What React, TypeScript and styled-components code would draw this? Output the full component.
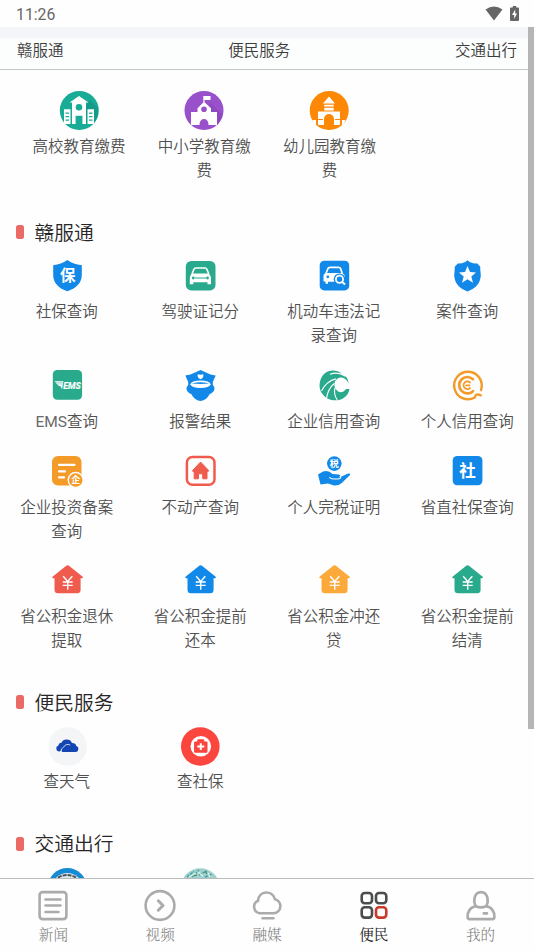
import React from "react";
import styled, { createGlobalStyle } from "styled-components";

const GlobalStyle = createGlobalStyle`
  * { box-sizing: border-box; }
  body { margin: 0; background: #fff; }
`;

const sans = `Roboto, "Noto Sans CJK SC", sans-serif`;
const sansBook = `"Noto Sans CJK SC DemiLight", "Noto Sans CJK SC", sans-serif`;

const Screen = styled.div`
  position: relative;
  display: flex;
  flex-direction: column;
  width: 534px;
  height: 950px;
  overflow: hidden;
  background: #fefefe;
  color: #555;
  font-family: ${sans};
`;

const StatusBar = styled.header`
  display: flex;
  align-items: center;
  justify-content: space-between;
  flex: none;
  height: 27px;
  padding: 1px 15px 0 16px;
  font-size: 15.8px;
  color: #666;
`;

const StatusIcons = styled.div`
  display: flex;
  align-items: center;
  gap: 7px;
  height: 100%;
  padding-bottom: 2px;
`;

const Band = styled.div`
  flex: none;
  height: 11px;
  background: #f4f5f9;
`;

const AnchorBar = styled.nav`
  display: flex;
  justify-content: space-between;
  flex: none;
  height: 32px;
  padding: 0 17px;
  border-bottom: 1px solid #c4c5c5;
  font-family: ${sansBook};
  font-size: 15.5px;
  line-height: 23px;
  font-weight: 350;
  color: #3c3c3c;
  background: #fcfefe;
`;

const Content = styled.main`
  flex: 1;
  min-height: 0;
  overflow: hidden;
  padding-top: 21.3px;
`;

const Grid = styled.div<{ $inset?: boolean }>`
  display: grid;
  grid-template-columns: repeat(4, ${(p) => (p.$inset ? "125.2px" : "133.5px")});
  padding-left: ${(p) => (p.$inset ? "16.5px" : "0")};
`;

const Service = styled.div`
  display: flex;
  flex-direction: column;
  align-items: center;
  padding-bottom: 18.1px;
`;

const Label = styled.div`
  width: 96px;
  margin-top: 4.9px;
  font-family: "Liberation Sans", ${sansBook};
  font-size: 15.5px;
  font-weight: 350;
  line-height: 23.6px;
  text-align: center;
  white-space: nowrap;
  color: #515151;
`;

const Latin = styled.span`
  font-family: Roboto, sans-serif;
  font-weight: 400;
  color: #6a6a6a;
`;

const SectionTitle = styled.h2`
  display: flex;
  align-items: center;
  gap: 11px;
  height: 56px;
  margin: 0;
  padding: 5.5px 0 0 16px;
  font-family: ${sansBook};
  font-size: 19.8px;
  font-weight: 350;
  color: #262626;
`;

const Marker = styled.span`
  width: 7.5px;
  height: 14px;
  margin-top: 2px;
  border-radius: 2.5px;
  background: #ec6a66;
`;

const Glyph = styled.svg`
  display: block;
  flex: none;
  width: 40px;
  height: 39px;
`;

const ScrollThumb = styled.div`
  position: absolute;
  top: 27px;
  right: 0;
  width: 6px;
  height: 702px;
  background: #b5b5b5;
`;

const TabBar = styled.footer`
  display: grid;
  grid-template-columns: repeat(5, 1fr);
  flex: none;
  height: 72px;
  border-top: 1px solid #bbb;
`;

const Tab = styled.div<{ $active?: boolean }>`
  display: flex;
  flex-direction: column;
  align-items: center;
  padding-top: 9px;
  color: ${(p) => (p.$active ? "#222" : "#808080")};
  font-family: "Noto Serif CJK SC", "Noto Serif SC", "Source Han Serif SC", "Noto Sans CJK SC", serif;
  font-size: 14.6px;
  font-weight: ${(p) => (p.$active ? 400 : 300)};
  line-height: 22px;
`;

const TabGlyph = styled.svg`
  display: block;
  width: 34px;
  height: 34px;
  margin-bottom: 1px;
  fill: none;
  stroke: #ababab;
  stroke-width: 2.6;
  stroke-linecap: round;
  stroke-linejoin: round;
`;

const GlyphText = styled.text`
  font-family: ${sans};
  font-weight: 700;
  text-anchor: middle;
`;

const Box = ({ children }: { children: React.ReactNode }) => <Glyph viewBox="0 0 40 39">{children}</Glyph>;

const blue = "#1289e8";
const green = "#2aaa8c";
const orange = "#f39a28";
const red = "#ef5c4e";

const University = () => (
  <Box>
    <circle cx="20.3" cy="19.5" r="19.5" fill="#18ab96" />
    <path d="M31 9 39 17V25L35 33H14Z" fill="#108e7b" opacity=".5" />
    <path d="M20 5 29.5 11.6H27V33H13V11.6H10.5Z" fill="#fff" />
    <path d="M5 18.3H11.5V33H5ZM28.5 18.3H35V33H28.5Z" fill="#fff" />
    <circle cx="20" cy="16.3" r="3.3" fill="#18ab96" />
    <path d="M16.6 24.8H23.4V33H16.6ZM6.5 21.5h3.5v1.2H6.5Zm0 3.5h3.5v1.2H6.5Zm0 3.5h3.5v1.2H6.5ZM30 21.5h3.5v1.2H30Zm0 3.5h3.5v1.2H30Zm0 3.5h3.5v1.2H30Z" fill="#18ab96" />
  </Box>
);

const School = () => (
  <Box>
    <circle cx="20" cy="19.5" r="19.5" fill="#9850cb" />
    <path d="M26 12 39 24 34 34H22Z" fill="#783ba9" opacity=".35" />
    <path d="M19.3 5H26.5V9H20.5V11.3L27 17.2V21H33V34H7V21H13.5V17.2L19.3 11.6Z" fill="#fff" />
    <circle cx="20" cy="18.3" r="2.8" fill="#9850cb" />
    <path d="M15.6 34V32.5a4.4 4.4 0 0 1 8.8 0V34Z" fill="#9850cb" />
  </Box>
);

const Kindergarten = () => (
  <Box>
    <circle cx="20.2" cy="19.5" r="19.5" fill="#fc8806" />
    <path d="M20 5.5 26 12.5H14ZM15.3 13.8H24.7V15.5H15.3ZM15.3 16.7H24.7V19.5H15.3Z" fill="#fff" />
    <path d="M9 20.5H31V34H25V28a5 5 0 0 0-10 0V34H9Z" fill="#fff" />
    <path d="M3.5 29H7V34H5ZM33 29H36.5L34 34H33Z" fill="#fff" />
    <path d="M8 28.5H14M26 28.5H32M8 28.5V34M32 28.5V34" stroke="#fc8806" strokeWidth="1" />
  </Box>
);

const Insurance = () => (
  <Box>
    <path d="M20.3 4C24.5 6.8 29 8.5 34.8 9.2V19C34.8 27 29 32.5 20.3 35.2C11.8 32.5 6.2 27 6.2 19V9.2C11.5 8.5 16.2 6.8 20.3 4Z" fill={blue} />
    <GlyphText x="20.7" y="25.3" fontSize="15.5" fill="#fff">保</GlyphText>
  </Box>
);

const Licence = () => (
  <Box>
    <rect x="5.8" y="4.9" width="29.7" height="29.5" rx="5.5" fill={green} />
    <path d="M12 18 14 13.1Q14.4 12 15.8 12H25Q26.4 12 26.8 13.1L28.8 18" fill="none" stroke="#fff" strokeWidth="1.6" />
    <path d="M12 17.5H28.5Q31 19 31 22V28.3H27.5V26.3H13.3V28.3H9.8V22Q9.8 19 12 17.5Z" fill="#fff" />
    <circle cx="13.3" cy="22" r="1.4" fill={green} />
    <circle cx="27.5" cy="22" r="1.4" fill={green} />
    <path d="M15 22H26" stroke={green} strokeWidth="1" />
  </Box>
);

const Violation = () => (
  <Box>
    <rect x="5.7" y="4.7" width="29.5" height="29.7" rx="4.5" fill={blue} />
    <path d="M12 17.5 14 12.4Q14.5 11.3 16 11.3H24.5Q26 11.3 26.5 12.4L28.3 17.5" fill="none" stroke="#fff" strokeWidth="1.7" />
    <path d="M11.5 17H28Q30.7 18 30.7 20V23H21V25.7H14V27.8H11.5V25.5H9.5V20Q9.5 18 11.5 17Z" fill="#fff" />
    <circle cx="13.8" cy="20.8" r="1.4" fill={blue} />
    <circle cx="25.5" cy="23.2" r="5.8" fill={blue} />
    <circle cx="25.5" cy="23.2" r="3.6" fill={blue} stroke="#fff" strokeWidth="1.8" />
    <path d="M28.3 26 31 28.5" stroke="#fff" strokeWidth="2" />
  </Box>
);

const Badge = () => (
  <Box>
    <path d="M20.5 4.2C22.5 6.5 27 8 30 7.2L33.3 10.7C33 13.5 33.8 16.5 33.8 20C33 28 28 32.5 20.5 35.5C13 32.5 8 28 7.2 20C7.2 16.5 8 13.5 7.7 10.7L11 7.2C14 8 18.5 6.5 20.5 4.2Z" fill={blue} />
    <path d="M20.5 10 23 16 29 16.4 24.3 20.5 26 26.7 20.5 23.3 15 26.7 16.7 20.5 12 16.4 18 16Z" fill="#fff" />
  </Box>
);

const Ems = () => (
  <Box>
    <rect x="5.8" y="4" width="29.3" height="29.7" rx="4.5" fill={green} />
    <path d="M7.5 15.2H16.5L15 23.2 13.8 20.5 11.2 19.4Z" fill="#fff" />
    <path d="M8 16.6H17M10 18H17" stroke={green} strokeWidth=".4" />
    <GlyphText x="25" y="22.9" fontSize="9.4" fontStyle="italic" textLength="17.5" lengthAdjust="spacingAndGlyphs" fill="#fff" stroke="#fff" strokeWidth=".2">EMS</GlyphText>
  </Box>
);

const Police = () => (
  <Box>
    <path d="M20.5 4 26.5 6.8Q30 9 35.7 9.4L32.8 16V19C36.3 22.5 34 26.5 29.5 28.3 27 33 23.5 34.9 20.5 34.9S14 33 11.5 28.3C7 26.5 4.7 22.5 8.2 19V16L5.3 9.4Q11 9 14.5 6.8Z" fill={blue} />
    <path d="M17.7 8.2 20.5 8.8 23.3 8.2V10.5Q22.7 12.6 20.5 13.2 18.3 12.6 17.7 10.5Z" fill="#fff" />
    <ellipse cx="20.5" cy="18.2" rx="10" ry="3.8" fill="#fff" />
    <path d="M11.7 17.5Q20.5 15 29.3 17.5Q20.5 18.4 11.7 17.5Z" fill={blue} />
  </Box>
);

const Enterprise = () => (
  <Box>
    <path d="M28 8C23 3.2 14 3.5 9.5 8.5S4 23 8.5 28C13 35 23 35.8 29 32.5C33 30 35 26.5 35.5 23H32C29 27.3 25 26.8 22.8 24.3C19.3 20.8 19.8 15 23.3 12.7C26.8 10.3 31.2 11.5 34.5 17C34 12 31.5 9.7 28 8Z" fill={green} />
    <path d="M16 8.3C21 6.3 27 7.2 31.5 10.3M7.5 25C11 18 15 14.5 22 12.9M12.5 32.5C13.5 25.5 16 21 20.3 17.5M23.5 34.5C20.5 30 20 25.5 21 22" fill="none" stroke="#fefefe" strokeWidth="1.1" />
  </Box>
);

const Credit = () => (
  <Box>
    <g fill="none" stroke={orange} strokeLinecap="round">
      <path d="M34 24A13.8 13.8 0 1 0 27.8 31.5Q28.5 27 33.8 29.3" strokeWidth="2.4" />
      <path d="M26 13.2A8.2 8.2 0 1 0 26 25.2" strokeWidth="2.7" />
      <path d="M23 16.5A3.8 3.8 0 1 0 23 22M19 19.3H22.5" strokeWidth="1.8" />
    </g>
  </Box>
);

const Filing = () => (
  <Box>
    <rect x="5" y="4" width="29.5" height="29.5" rx="6" fill={orange} />
    <path d="M12 12.8H27.5M12 19.4H18M12 25.4H17" stroke="#fff" strokeWidth="2.2" strokeLinecap="round" />
    <circle cx="28.7" cy="28" r="7.5" fill={orange} stroke="#fff" strokeWidth="1.4" />
    <GlyphText x="28.7" y="31.3" fontSize="9" fill="#fff">企</GlyphText>
  </Box>
);

const Property = () => (
  <Box>
    <rect x="6.9" y="5.1" width="27.6" height="27.6" rx="5.5" fill="none" stroke={red} strokeWidth="2.5" />
    <path d="M20.6 10 28.7 18.6 28.3 19.4H27V26.8H22.7V21.8H18.5V26.8H14.2V19.4H12.9L12.5 18.6Z" fill={red} stroke={red} strokeLinejoin="round" />
  </Box>
);

const Tax = () => (
  <Box>
    <circle cx="20.3" cy="11.6" r="7.3" fill={blue} />
    <GlyphText x="20.3" y="15" fontSize="9" fill="#fff">税</GlyphText>
    <path d="M4 22.5 9 19.4Q15 18 18.5 22L25 22.5Q27 23 26.5 25L33.5 21.7Q36.8 21 36 22.9L27.5 31.2Q24.5 33.9 20 33.5L14 31.4 6.5 32.4Z" fill={blue} />
    <path d="M15.5 25.6Q17.8 27.4 23 27T26 24.3" stroke="#fff" strokeWidth="1.1" fill="none" strokeLinecap="round" />
  </Box>
);

const Social = () => (
  <Box>
    <rect x="5.7" y="4" width="29.7" height="29.3" rx="4.5" fill={blue} />
    <GlyphText x="20.6" y="25" fontSize="16.5" fill="#fff">社</GlyphText>
  </Box>
);

const Fund = ({ color }: { color: string }) => (
  <Box>
    <path d="M18.6 5.2Q20.6 3.5 22.6 5.2L35.4 15.4Q36.8 17 34.9 17.2H33.6V28.7Q33.6 32.2 30.1 32.2H11Q7.5 32.2 7.5 28.7V17.2H6.2Q4.4 17 5.8 15.4Z" fill={color} />
    <path d="M16.2 15.2 20.7 20.5 25.3 15.2M15.7 21H25.7M15.7 24.4H25.7M20.7 20.4V28.7" fill="none" stroke="#fff" strokeWidth="1.4" />
  </Box>
);

const Weather = () => (
  <Box>
    <circle cx="20.7" cy="19.5" r="19.3" fill="#f4f5f6" />
    <path d="M13 24.5H12A3 3 0 0 1 11.5 18.6Q11.5 16 14.5 15.8Q16 12.5 19.5 12.6Q23.5 12.5 25 16Q29 16 29.2 19Q31.7 19.5 31.3 22.5Q31 25 28.5 25H15Q12.5 23 15.5 20.5Z" fill="#1446b3" />
    <path d="M14.5 25Q13 21.5 16.8 20Q18.8 16.2 23.2 18" stroke="#f4f5f6" strokeWidth=".8" fill="none" />
  </Box>
);

const Medical = () => (
  <Box>
    <circle cx="20.3" cy="19.5" r="19.3" fill="#fb453f" />
    <circle cx="20.8" cy="19.3" r="10.3" fill="#fff" />
    <path d="M17.8 12.8H23.8V15H27V25.2H14.6V15H17.8Z" fill="#fb453f" stroke="#fb453f" strokeLinejoin="round" />
    <path d="M20.8 16.2V23M17.3 19.6H24.3" stroke="#fff" strokeWidth="2" />
  </Box>
);

const Traffic = () => (
  <Box>
    <circle cx="20.3" cy="19.5" r="19.5" fill="#168bd5" />
    <circle cx="20.3" cy="20.5" r="15.5" fill="#dfe6eb" />
    <path d="M11 9.5Q20 4.5 29 9.5" stroke="#46525b" strokeWidth="2" strokeDasharray="4 1" fill="none" />
  </Box>
);

const Transit = () => (
  <Box>
    <circle cx="20.3" cy="19.5" r="19.3" fill="#9fd0cd" />
    <path d="M7 9 14 3.5M12 9 19 2M19 7 27 3M25 9 32 6" stroke="#399faa" strokeWidth="1.4" strokeDasharray="3 1" />
    <path d="M9 9 16 5M18 4 23 8M28 5 30 9" stroke="#e8f1dc" strokeWidth="1.3" />
    <path d="M14 8 17 7M25 3 27 6" stroke="#498b5c" strokeWidth="1.3" />
  </Box>
);

type Item = { lines: string[]; latin?: string; icon: React.ReactNode };

const education: Item[] = [
  { lines: ["高校教育缴费"], icon: <University /> },
  { lines: ["中小学教育缴", "费"], icon: <School /> },
  { lines: ["幼儿园教育缴", "费"], icon: <Kindergarten /> },
];

const government: Item[] = [
  { lines: ["社保查询"], icon: <Insurance /> },
  { lines: ["驾驶证记分"], icon: <Licence /> },
  { lines: ["机动车违法记", "录查询"], icon: <Violation /> },
  { lines: ["案件查询"], icon: <Badge /> },
  { latin: "EMS", lines: ["查询"], icon: <Ems /> },
  { lines: ["报警结果"], icon: <Police /> },
  { lines: ["企业信用查询"], icon: <Enterprise /> },
  { lines: ["个人信用查询"], icon: <Credit /> },
  { lines: ["企业投资备案", "查询"], icon: <Filing /> },
  { lines: ["不动产查询"], icon: <Property /> },
  { lines: ["个人完税证明"], icon: <Tax /> },
  { lines: ["省直社保查询"], icon: <Social /> },
  { lines: ["省公积金退休", "提取"], icon: <Fund color={red} /> },
  { lines: ["省公积金提前", "还本"], icon: <Fund color={blue} /> },
  { lines: ["省公积金冲还", "贷"], icon: <Fund color="#fba93b" /> },
  { lines: ["省公积金提前", "结清"], icon: <Fund color={green} /> },
];

const convenience: Item[] = [
  { lines: ["查天气"], icon: <Weather /> },
  { lines: ["查社保"], icon: <Medical /> },
];

const travel: Item[] = [
  { lines: [], icon: <Traffic /> },
  { lines: [], icon: <Transit /> },
];

const Services = ({ items, inset }: { items: Item[]; inset?: boolean }) => (
  <Grid $inset={inset}>
    {items.map((item, i) => (
      <Service key={i}>
        {item.icon}
        <Label>
          {item.lines.map((line, row) => (
            <div key={line}>
              {row === 0 && item.latin && <Latin>{item.latin}</Latin>}
              {line}
            </div>
          ))}
        </Label>
      </Service>
    ))}
  </Grid>
);

const Heading = ({ children }: { children: React.ReactNode }) => (
  <SectionTitle>
    <Marker />
    {children}
  </SectionTitle>
);

export default function App() {
  return (
    <>
      <GlobalStyle />
      <Screen>
        <StatusBar>
          <span>11:26</span>
          <StatusIcons>
            <svg width="18" height="15" viewBox="0 0 18 15">
              <path d="M.5 3.6Q9-2.8 17.5 3.6L9 14.5Z" fill="#666" />
            </svg>
            <svg width="9" height="15" viewBox="0 0 9 15">
              <path d="M2.8 0H6.2V1.5H8Q9 1.5 9 2.5V14Q9 15 8 15H1Q0 15 0 14V2.5Q0 1.5 1 1.5H2.8Z" fill="#666" />
              <path d="M5.2 3.5 2 9H4.2V13L7 7.5H5.2Z" fill="#fff" />
            </svg>
          </StatusIcons>
        </StatusBar>
        <Band />
        <AnchorBar>
          <span>赣服通</span>
          <span>便民服务</span>
          <span>交通出行</span>
        </AnchorBar>
        <Content>
          <Services items={education} inset />
          <Heading>赣服通</Heading>
          <Services items={government} />
          <Heading>便民服务</Heading>
          <Services items={convenience} />
          <Heading>交通出行</Heading>
          <Services items={travel} />
        </Content>
        <TabBar>
          <Tab>
            <TabGlyph viewBox="0 0 34 34">
              <rect x="3.6" y="4.1" width="26.8" height="27" rx="3" />
              <path d="M9.5 11.5H24.5M9.5 17.5H24.5M9.5 24H22.5" />
            </TabGlyph>
            新闻
          </Tab>
          <Tab>
            <TabGlyph viewBox="0 0 34 34">
              <circle cx="17" cy="17.5" r="14.4" />
              <path d="M15.3 12.8 20 17.5 15.3 22.2" strokeWidth="3" />
            </TabGlyph>
            视频
          </Tab>
          <Tab>
            <TabGlyph viewBox="0 0 34 34">
              <path d="M9.5 25.3A6.6 6.6 0 0 1 8 12.8C9 2 22.5 2.2 25 11.2A7.2 7.2 0 0 1 24 25.3ZM12.5 30.3H23.5" />
            </TabGlyph>
            融媒
          </Tab>
          <Tab $active>
            <TabGlyph viewBox="0 0 34 34">
              <g stroke="#4b4d4d">
                <rect x="4.7" y="5" width="10.3" height="10.3" rx="3" />
                <rect x="19" y="5" width="10.3" height="10.3" rx="3" />
                <rect x="4.7" y="19.3" width="10.3" height="10.3" rx="3" />
              </g>
              <rect x="19" y="19.3" width="10.3" height="10.3" rx="3" stroke="#c93a28" />
            </TabGlyph>
            便民
          </Tab>
          <Tab>
            <TabGlyph viewBox="0 0 34 34">
              <path d="M11.8 18.3C8.8 13 10.3 4.1 17 4.1S25.2 13 22.2 18.3M11.8 18.3C6.5 19 3.3 23.5 3.6 29Q3.6 31.1 5.5 31.1H28.5Q30.4 31.1 30.4 29C30.7 23.5 27.5 19 22.2 18.3Q17 20.5 11.8 18.3ZM19.8 25.4H23" />
            </TabGlyph>
            我的
          </Tab>
        </TabBar>
        <ScrollThumb />
      </Screen>
    </>
  );
}
